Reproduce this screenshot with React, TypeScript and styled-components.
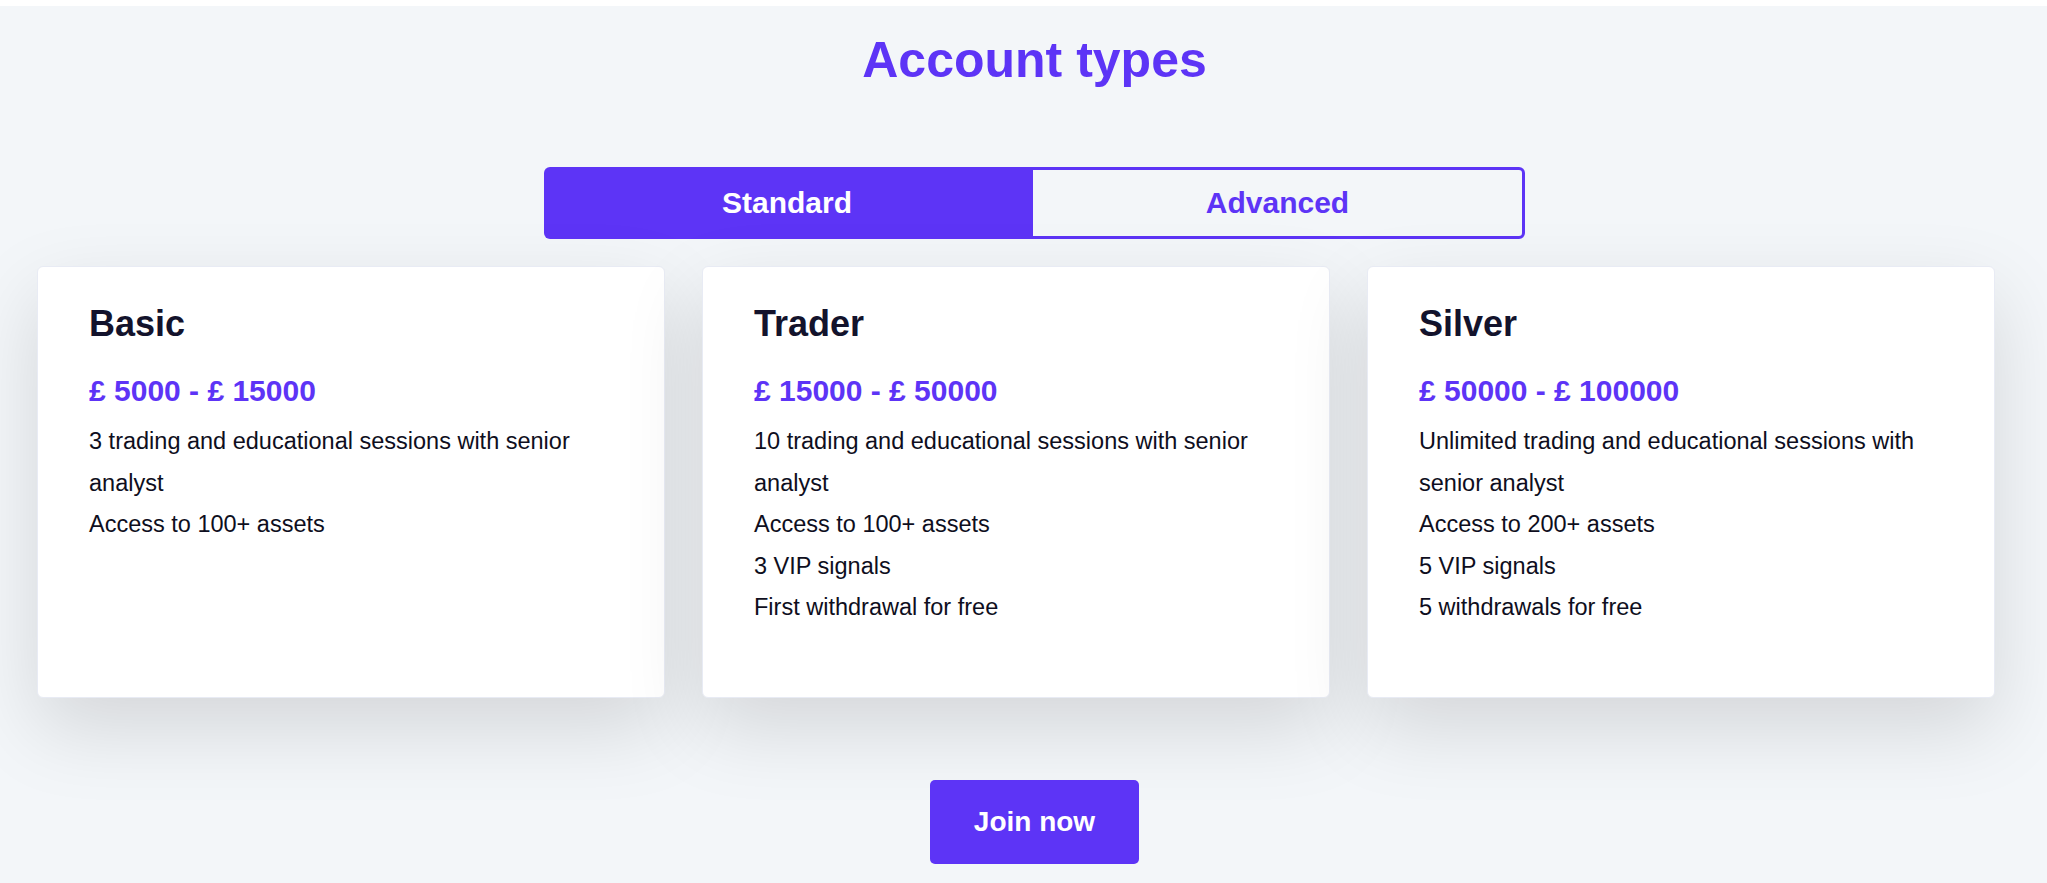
import styled, { createGlobalStyle } from 'styled-components';

const GlobalStyle = createGlobalStyle`
  html, body {
    margin: 0;
    padding: 0;
    background-color: #fff;
    overflow: hidden;
  }

  body {
    font-family: 'Liberation Sans', Arial, sans-serif;
  }

  * {
    box-sizing: border-box;
  }
`;

const PURPLE = '#5d34f6';

interface IAccount {
  name: string;
  range: string;
  features: string[];
}

const STANDARD_ACCOUNTS: IAccount[] = [
  {
    name: 'Basic',
    range: '£ 5000 - £ 15000',
    features: ['3 trading and educational sessions with senior analyst', 'Access to 100+ assets'],
  },
  {
    name: 'Trader',
    range: '£ 15000 - £ 50000',
    features: [
      '10 trading and educational sessions with senior analyst',
      'Access to 100+ assets',
      '3 VIP signals',
      'First withdrawal for free',
    ],
  },
  {
    name: 'Silver',
    range: '£ 50000 - £ 100000',
    features: [
      'Unlimited trading and educational sessions with senior analyst',
      'Access to 200+ assets',
      '5 VIP signals',
      '5 withdrawals for free',
    ],
  },
];

const App = () => {
  return (
    <>
      <GlobalStyle />
      <AccountSection>
        <SectionTitle>Account types</SectionTitle>
        <TabSwitch>
          <TabButton $active>Standard</TabButton>
          <TabButton>Advanced</TabButton>
        </TabSwitch>
        <CardGrid>
          {STANDARD_ACCOUNTS.map((account) => (
            <AccountCard key={account.name}>
              <CardTitle>{account.name}</CardTitle>
              <CardRange>{account.range}</CardRange>
              <FeatureList>
                {account.features.map((feature) => (
                  <li key={feature}>{feature}</li>
                ))}
              </FeatureList>
            </AccountCard>
          ))}
        </CardGrid>
        <JoinButton>Join now</JoinButton>
      </AccountSection>
    </>
  );
};

export default App;

const AccountSection = styled.section`
  margin-top: 6px;
  height: 877px;
  padding: 25px 0 19px 22px;
  background-color: #f3f6f9;
  display: flex;
  flex-direction: column;
  align-items: center;
`;

const SectionTitle = styled.h1`
  margin: 0;
  font-size: 50px;
  line-height: 58px;
  font-weight: 700;
  color: ${PURPLE};
`;

const TabSwitch = styled.div`
  margin-top: 78px;
  width: 981px;
  height: 72px;
  display: grid;
  grid-template-columns: 486px 1fr;
`;

const TabButton = styled.button<{ $active?: boolean }>`
  display: flex;
  align-items: center;
  justify-content: center;
  font-family: inherit;
  font-size: 30px;
  line-height: 1;
  font-weight: 700;
  cursor: pointer;
  color: ${({ $active }) => ($active ? '#fff' : PURPLE)};
  background-color: ${({ $active }) => ($active ? PURPLE : 'transparent')};
  border: ${({ $active }) => ($active ? 'none' : `3px solid ${PURPLE}`)};
  border-radius: ${({ $active }) => ($active ? '6px 0 0 6px' : '0 6px 6px 0')};
`;

const CardGrid = styled.div`
  margin: 27px 0 0 15px;
  align-self: flex-start;
  width: 1958px;
  display: grid;
  grid-template-columns: repeat(3, 628px);
  column-gap: 37px;
`;

const AccountCard = styled.article`
  padding: 36px 51px 68px 51px;
  background-color: #fff;
  border: 1px solid #e8ebf4;
  border-radius: 6px;
  box-shadow: 0 30px 80px rgba(0, 0, 0, 0.13);
`;

const CardTitle = styled.h3`
  margin: 0;
  font-size: 36px;
  line-height: 42px;
  font-weight: 700;
  color: #13132c;
`;

const CardRange = styled.p`
  margin: 28px 0 0 0;
  font-size: 30px;
  line-height: 36px;
  font-weight: 700;
  color: ${PURPLE};
`;

const FeatureList = styled.ul`
  margin: 12px 0 0 0;
  padding: 0;
  list-style: none;
  font-size: 23.5px;
  line-height: 41.5px;
  color: #0e0e20;
`;

const JoinButton = styled.button`
  margin-top: 82px;
  width: 209px;
  height: 84px;
  font-family: inherit;
  font-size: 28px;
  font-weight: 700;
  color: #fff;
  background-color: ${PURPLE};
  border: none;
  border-radius: 5px;
  cursor: pointer;
`;
